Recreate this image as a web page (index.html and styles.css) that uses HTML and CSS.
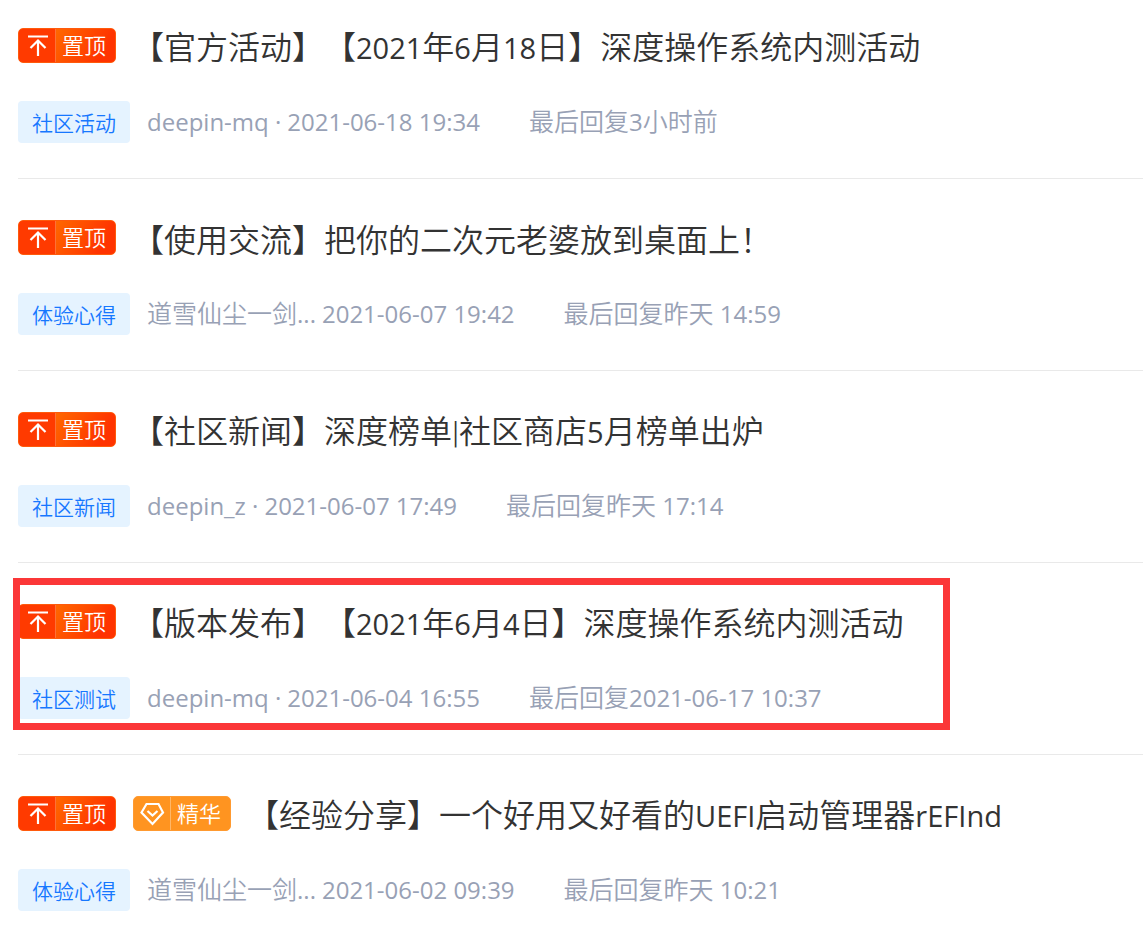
FILE: index.html
```html
<!DOCTYPE html>
<html lang="zh-CN">
<head>
<meta charset="utf-8">
<title>社区帖子</title>
<link rel="stylesheet" href="styles.css">
</head>
<body>
<svg class="defs" aria-hidden="true">
  <symbol id="icon-top" viewBox="0 0 37 35"><path d="M10 8.5H30M20 28V12.5M12.5 20L20 12.5L27.500 20" fill="none" stroke="#fff" stroke-width="2.200"/></symbol>
  <symbol id="icon-gem" viewBox="0 0 37 35"><path d="M13.500 8H25.500L30 16.500L19.500 28L8.500 16.500ZM14.500 15L19.500 19.500L24.500 15" fill="none" stroke="#fff" stroke-width="2.200"/></symbol>
</svg>
<main class="posts">
  <article class="post">
    <header class="head">
      <span class="badge badge-top"><svg class="badge-icon" aria-hidden="true"><use href="#icon-top"/></svg><span class="badge-text">置顶</span></span>
      <a class="title" href="#">【官方活动】【<span class="num">2021</span>年<span class="num">6</span>月<span class="num">18</span>日】深度操作系统内测活动</a>
    </header>
    <div class="meta">
      <a class="tag" href="#">社区活动</a>
      <span class="author">deepin-mq ·</span><time class="date">2021-06-18 19:34</time>
      <span class="reply"><span class="han">最后回复</span>3<span class="han">小时前</span></span>
    </div>
  </article>
  <article class="post">
    <header class="head">
      <span class="badge badge-top"><svg class="badge-icon" aria-hidden="true"><use href="#icon-top"/></svg><span class="badge-text">置顶</span></span>
      <a class="title" href="#">【使用交流】把你的二次元老婆放到桌面上！</a>
    </header>
    <div class="meta">
      <a class="tag" href="#">体验心得</a>
      <span class="author"><span class="han">道雪仙尘一剑</span>...</span><time class="date">2021-06-07 19:42</time>
      <span class="reply"><span class="han">最后回复昨天</span> 14:59</span>
    </div>
  </article>
  <article class="post">
    <header class="head">
      <span class="badge badge-top"><svg class="badge-icon" aria-hidden="true"><use href="#icon-top"/></svg><span class="badge-text">置顶</span></span>
      <a class="title" href="#">【社区新闻】深度榜单<span class="bar">|</span>社区商店<span class="num">5</span>月榜单出炉</a>
    </header>
    <div class="meta">
      <a class="tag" href="#">社区新闻</a>
      <span class="author">deepin_z ·</span><time class="date">2021-06-07 17:49</time>
      <span class="reply"><span class="han">最后回复昨天</span> 17:14</span>
    </div>
  </article>
  <article class="post post-marked">
    <header class="head">
      <span class="badge badge-top"><svg class="badge-icon" aria-hidden="true"><use href="#icon-top"/></svg><span class="badge-text">置顶</span></span>
      <a class="title" href="#">【版本发布】【<span class="num">2021</span>年<span class="num">6</span>月<span class="num">4</span>日】深度操作系统内测活动</a>
    </header>
    <div class="meta">
      <a class="tag" href="#">社区测试</a>
      <span class="author">deepin-mq ·</span><time class="date">2021-06-04 16:55</time>
      <span class="reply"><span class="han">最后回复</span>2021-06-17 10:37</span>
    </div>
  </article>
  <article class="post">
    <header class="head">
      <span class="badge badge-top"><svg class="badge-icon" aria-hidden="true"><use href="#icon-top"/></svg><span class="badge-text">置顶</span></span>
      <span class="badge badge-best"><svg class="badge-icon" aria-hidden="true"><use href="#icon-gem"/></svg><span class="badge-text">精华</span></span>
      <a class="title" href="#">【经验分享】一个好用又好看的<span class="num">UEFI</span>启动管理器<span class="num">rEFInd</span></a>
    </header>
    <div class="meta">
      <a class="tag" href="#">体验心得</a>
      <span class="author"><span class="han">道雪仙尘一剑</span>...</span><time class="date">2021-06-02 09:39</time>
      <span class="reply"><span class="han">最后回复昨天</span> 10:21</span>
    </div>
  </article>
</main>
</body>
</html>
```
FILE: styles.css
```css
body {
  margin: 0;
  background: #fff;
  font-family: "Open Sans", "Noto Sans CJK SC", sans-serif;
  text-spacing-trim: space-all;
  overflow-x: hidden;
}

a {
  color: inherit;
  text-decoration: none;
}

.defs {
  position: absolute;
  width: 0;
  height: 0;
}

.posts {
  padding-left: 18px;
}

.post {
  padding: 41px 0 35px;
  border-bottom: 1px solid #e9e9e9;
}

.post:first-child {
  padding-top: 28px;
}

.post:last-child {
  border-bottom: 0;
}

.head {
  display: flex;
  align-items: center;
  gap: 17px;
  height: 35px;
  margin-bottom: 38px;
}

.badge {
  display: flex;
  flex: none;
  box-sizing: border-box;
  width: 98px;
  height: 35px;
  border-radius: 5px;
  overflow: hidden;
  color: #fff;
}

.badge-top {
  background: linear-gradient(120deg, #ff6a00 30%, #ff3300 85%);
  border: 1px solid #ff5a0c;
}

.badge-top .badge-icon {
  background: #ff3a00;
  border-right: 1px solid #ff7038;
}

.badge-best {
  background: #ff9420;
  border: 1px solid #ff9a30;
}

.badge-best .badge-icon {
  border-right: 1px solid #ffb768;
}

.badge-icon {
  flex: none;
  width: 37px;
  height: 35px;
  margin: -1px 0 -1px -1px;
}

.badge-text {
  padding-left: 6px;
  font-family: "Noto Sans CJK SC", sans-serif;
  font-size: 22px;
  font-weight: 350;
  line-height: 31px;
}

.title {
  color: #333;
  font-family: "Noto Sans CJK SC", sans-serif;
  font-size: 32px;
  font-weight: 350;
  line-height: 35px;
  margin-left: -1px;
  padding-top: 2px;
  white-space: nowrap;
}

.num {
  font-family: "Open Sans", sans-serif;
  font-size: 29px;
  font-weight: 400;
}

.bar {
  font-family: Roboto, sans-serif;
  font-weight: 300;
}

.meta {
  display: flex;
  align-items: center;
  height: 42px;
  color: #98a1b5;
  font-size: 24px;
  line-height: 42px;
  white-space: nowrap;
}

.han {
  font-family: "Noto Sans CJK SC", sans-serif;
  font-size: 25px;
  font-weight: 350;
  line-height: 1;
}

.tag {
  width: 112px;
  margin-right: 17px;
  border-radius: 4px;
  background: #e5f3ff;
  color: #1677ff;
  font-family: "Noto Sans CJK SC", sans-serif;
  font-size: 21px;
  font-weight: 350;
  text-align: center;
}

.date {
  margin-left: 6px;
}

.reply {
  margin-left: 49px;
}

.post-marked {
  position: relative;
}

.post-marked::after {
  content: "";
  position: absolute;
  top: 15px;
  left: -5px;
  box-sizing: border-box;
  width: 937px;
  height: 152px;
  border: 7px solid #fb3738;
}
```
